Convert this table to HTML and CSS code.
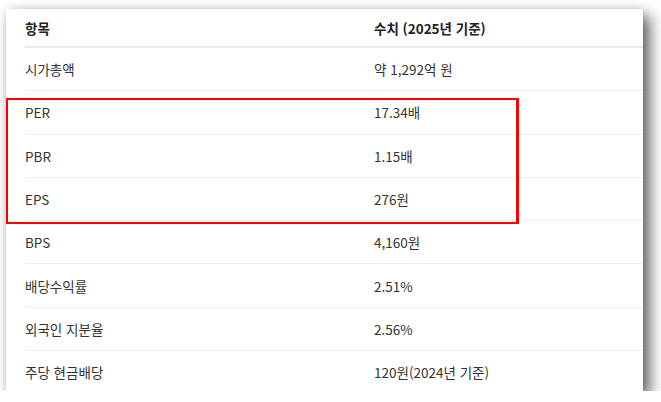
FILE: index.html
```html
<!DOCTYPE html>
<html lang="ko">
<head>
<meta charset="utf-8">
<link rel="stylesheet" href="styles.css">
</head>
<body>
<div class="card">
  <table class="tbl">
    <thead>
      <tr><th class="c1">항목</th><th>수치 (2025년 기준)</th></tr>
    </thead>
    <tbody>
      <tr><td class="c1">시가총액</td><td>약 1,292억 원</td></tr>
      <tr><td class="c1">PER</td><td>17.34배</td></tr>
      <tr><td class="c1">PBR</td><td>1.15배</td></tr>
      <tr><td class="c1">EPS</td><td>276원</td></tr>
      <tr><td class="c1">BPS</td><td>4,160원</td></tr>
      <tr><td class="c1">배당수익률</td><td>2.51%</td></tr>
      <tr><td class="c1">외국인 지분율</td><td>2.56%</td></tr>
      <tr class="last"><td class="c1">주당 현금배당</td><td>120원(2024년 기준)</td></tr>
    </tbody>
  </table>
  <div class="highlight"></div>
</div>
</body>
</html>
```
FILE: styles.css
```css
html, body {
  margin: 0;
  padding: 0;
  background: #ffffff;
}
body {
  padding: 9px 0 0 6px;
  font-family: "Noto Sans CJK KR", "Noto Sans", sans-serif;
  font-size: 13.5px;
  color: #333;
}
.card {
  position: relative;
  width: 637px;
  height: 382px;
  background: #fff;
  box-shadow: 0 0 8px rgba(0, 0, 0, 0.12), 7px 7px 14px rgba(0, 0, 0, 0.6);
  overflow: hidden;
}
.tbl {
  margin-left: 19px;
  width: 618px;
  border-collapse: collapse;
}
.tbl th {
  text-align: left;
  font-weight: 700;
  color: #222;
  height: 37px;
  padding: 0;
  border-bottom: 2px solid #e8e8e8;
}
.tbl td {
  height: 42.3px;
  padding: 0;
  border-bottom: 1px solid #f0f0f0;
}
.tbl .last td {
  border-bottom: none;
}
.tbl .c1 {
  width: 349px;
}
.highlight {
  position: absolute;
  left: 0;
  top: 89px;
  width: 508px;
  height: 122px;
  border: 2px solid #f00;
  border-right-width: 3px;
}
```
